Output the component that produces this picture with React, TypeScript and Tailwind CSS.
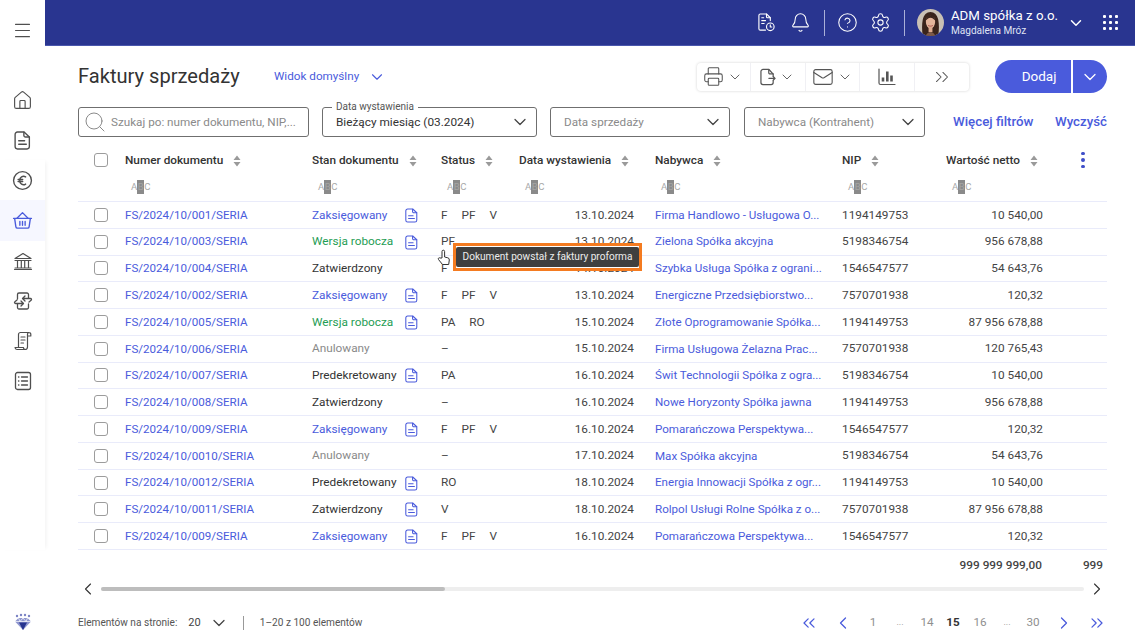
import { ChevronDown, ChevronLeft, ChevronRight, ChevronsLeft, ChevronsRight, Search, Bell, CircleHelp, Settings, Menu, House, Printer, Mail } from 'lucide-react';

const BLUE = 'text-[#4a5bdc]';

type Row = {
  id: string;
  state: string;
  tone: 'blue' | 'green' | 'dark' | 'gray';
  doc: boolean;
  tags: string[];
  date: string;
  buyer: string;
  nip: string;
  net: string;
};

const rows: Row[] = [
  { id: 'FS/2024/10/001/SERIA', state: 'Zaksięgowany', tone: 'blue', doc: true, tags: ['F', 'PF', 'V'], date: '13.10.2024', buyer: 'Firma Handlowo - Usługowa O...', nip: '1194149753', net: '10 540,00' },
  { id: 'FS/2024/10/003/SERIA', state: 'Wersja robocza', tone: 'green', doc: true, tags: ['PF'], date: '13.10.2024', buyer: 'Zielona Spółka akcyjna', nip: '5198346754', net: '956 678,88' },
  { id: 'FS/2024/10/004/SERIA', state: 'Zatwierdzony', tone: 'dark', doc: false, tags: ['F'], date: '14.10.2024', buyer: 'Szybka Usługa Spółka z ograni...', nip: '1546547577', net: '54 643,76' },
  { id: 'FS/2024/10/002/SERIA', state: 'Zaksięgowany', tone: 'blue', doc: true, tags: ['F', 'PF', 'V'], date: '13.10.2024', buyer: 'Energiczne Przedsiębiorstwo...', nip: '7570701938', net: '120,32' },
  { id: 'FS/2024/10/005/SERIA', state: 'Wersja robocza', tone: 'green', doc: true, tags: ['PA', 'RO'], date: '15.10.2024', buyer: 'Złote Oprogramowanie Spółka...', nip: '1194149753', net: '87 956 678,88' },
  { id: 'FS/2024/10/006/SERIA', state: 'Anulowany', tone: 'gray', doc: false, tags: ['–'], date: '15.10.2024', buyer: 'Firma Usługowa Żelazna Prac...', nip: '7570701938', net: '120 765,43' },
  { id: 'FS/2024/10/007/SERIA', state: 'Predekretowany', tone: 'dark', doc: true, tags: ['PA'], date: '16.10.2024', buyer: 'Świt Technologii Spółka z ogra...', nip: '5198346754', net: '10 540,00' },
  { id: 'FS/2024/10/008/SERIA', state: 'Zatwierdzony', tone: 'dark', doc: false, tags: ['–'], date: '16.10.2024', buyer: 'Nowe Horyzonty Spółka jawna', nip: '1194149753', net: '956 678,88' },
  { id: 'FS/2024/10/009/SERIA', state: 'Zaksięgowany', tone: 'blue', doc: true, tags: ['F', 'PF', 'V'], date: '16.10.2024', buyer: 'Pomarańczowa Perspektywa...', nip: '1546547577', net: '120,32' },
  { id: 'FS/2024/10/0010/SERIA', state: 'Anulowany', tone: 'gray', doc: false, tags: ['–'], date: '17.10.2024', buyer: 'Max Spółka akcyjna', nip: '5198346754', net: '54 643,76' },
  { id: 'FS/2024/10/0012/SERIA', state: 'Predekretowany', tone: 'dark', doc: true, tags: ['RO'], date: '18.10.2024', buyer: 'Energia Innowacji Spółka z ogr...', nip: '1194149753', net: '10 540,00' },
  { id: 'FS/2024/10/0011/SERIA', state: 'Zatwierdzony', tone: 'dark', doc: true, tags: ['V'], date: '18.10.2024', buyer: 'Rolpol Usługi Rolne Spółka z o...', nip: '7570701938', net: '87 956 678,88' },
  { id: 'FS/2024/10/009/SERIA', state: 'Zaksięgowany', tone: 'blue', doc: true, tags: ['F', 'PF', 'V'], date: '16.10.2024', buyer: 'Pomarańczowa Perspektywa...', nip: '1546547577', net: '120,32' },
];

const toneClass = {
  blue: 'text-[#4a5bdc]',
  green: 'text-[#1f9d55]',
  dark: 'text-[#333333]',
  gray: 'text-[#8a8a8a]',
};

function DocIcon({ className }: { className?: string }) {
  return (
    <svg viewBox="0 0 16 18" fill="none" stroke="currentColor" strokeWidth="1.3" strokeLinecap="round" strokeLinejoin="round" className={className}>
      <path d="M3.2 1h6.3l5 4.6v9.2a2.2 2.2 0 0 1-2.2 2.2H3.2A2.2 2.2 0 0 1 1 14.800V3.200A2.200 2.200 0 0 1 3.200 1Z" />
      <path d="M9.300 1.200v3a1.500 1.500 0 0 0 1.500 1.500h3.600" />
      <path d="M4.400 9.200h5.600M4.400 12.600h7.200" />
    </svg>
  );
}

function DocSendIcon() {
  return (
    <svg viewBox="0 0 17 18" fill="none" stroke="currentColor" strokeWidth="1.300" strokeLinecap="round" strokeLinejoin="round" className="w-[16px] h-[18px]">
      <path d="M14 8V6L9.500 1H3.200A2.200 2.200 0 0 0 1 3.200v11.600A2.200 2.200 0 0 0 3.200 17h8.600a2.200 2.200 0 0 0 2.200-2.200V13" />
      <path d="M9.300 1.200v3.300a1.200 1.200 0 0 0 1.200 1.200H14M9.500 10.500H16M14 8.500l2 2-2 2" />
    </svg>
  );
}

function ChartBarsIcon() {
  return (
    <svg viewBox="0 0 18 18" className="w-[18px] h-[18px]" fill="none" stroke="currentColor" strokeLinecap="round">
      <path d="M1 1v14a1.500 1.500 0 0 0 1.500 1.500H17" strokeWidth="1.200" />
      <path d="M5 9.500v4M9.300 3.500v10M13.500 7.500v6" strokeWidth="2.600" strokeLinecap="butt" />
    </svg>
  );
}

function DocClockIcon() {
  return (
    <svg viewBox="0 0 20 20" fill="none" stroke="currentColor" strokeWidth="1.2" strokeLinecap="round" strokeLinejoin="round" className="w-[19px] h-[19px] text-white">
      <path d="M9 18H3.500A1.500 1.500 0 0 1 2 16.500v-14A1.500 1.500 0 0 1 3.500 1H10l4 4v3" />
      <path d="M10 1.200V4a1 1 0 0 0 1 1h3M5 8h4M5 11h2.500M5 5h2" />
      <circle cx="14" cy="14.500" r="4" />
      <path d="M14 12.500v2.200h1.600" />
    </svg>
  );
}

function EuroCircleIcon() {
  return (
    <svg viewBox="0 0 20 20" fill="none" stroke="currentColor" strokeWidth="1.300" strokeLinecap="round" className="w-[21px] h-[21px]">
      <circle cx="10" cy="10" r="8.500" />
      <path d="M13 6.600a3.600 3.600 0 0 0-5.600 3.400 3.600 3.600 0 0 0 5.600 3.400M5.800 9h4.400M5.800 11h4.400" />
    </svg>
  );
}

function BasketIcon() {
  return (
    <svg viewBox="0 0 20 20" fill="none" stroke="currentColor" strokeWidth="1.300" strokeLinecap="round" strokeLinejoin="round" className="w-[21px] h-[21px]">
      <path d="M1.500 8h17M2.500 8l1.200 8a1.500 1.500 0 0 0 1.500 1.300h9.600a1.500 1.500 0 0 0 1.500-1.300l1.200-8" />
      <path d="M4.500 8 10 2.500 15.500 8M7.500 11v3.500M10 11v3.500M12.500 11v3.500" />
    </svg>
  );
}

function BankIcon() {
  return (
    <svg viewBox="0 0 20 20" fill="none" stroke="currentColor" strokeWidth="1.200" strokeLinecap="round" strokeLinejoin="round" className="w-[20px] h-[20px]">
      <path d="M2 7.500 10 2.500l8 5H2ZM2 9.500h16M4.500 9.500v7M8.300 9.500v7M11.700 9.500v7M15.500 9.500v7M2 17h16M1.500 18.500h17" />
    </svg>
  );
}

function ExchangeIcon() {
  return (
    <svg viewBox="0 0 20 20" fill="none" stroke="currentColor" strokeWidth="1.300" strokeLinecap="round" strokeLinejoin="round" className="w-[20px] h-[20px]">
      <path d="M4.500 8V3.500A1.500 1.500 0 0 1 6 2h8a1.500 1.500 0 0 1 1.500 1.500V7M15.500 13v3.500A1.500 1.500 0 0 1 14 18H6a1.500 1.500 0 0 1-1.500-1.500V13" />
      <path d="M10 7.500h7.500a1 1 0 0 1 .6 1.800L16 11M12 5l-2.500 2.500L12 10M10 12.500H2.500a1 1 0 0 1-.6-1.800L4 9M8 10l2.500 2.500L8 15" />
    </svg>
  );
}

function ScrollIcon() {
  return (
    <svg viewBox="0 0 20 20" fill="none" stroke="currentColor" strokeWidth="1.200" strokeLinecap="round" strokeLinejoin="round" className="w-[20px] h-[20px]">
      <path d="M5.500 16.500V3.500A2 2 0 0 1 7.500 1.500H16a1.800 1.800 0 0 1 1.800 1.800V5h-3.300M16 1.500a1.600 1.600 0 0 0-1.500 1.800V16a2.500 2.500 0 0 1-2.500 2.500H4a2.200 2.200 0 0 1-2-2h8.500a1.800 1.800 0 0 0 2 2" />
      <path d="M8 6h4M8 9h4M8 12h2.500" />
    </svg>
  );
}

function ListIcon() {
  return (
    <svg viewBox="0 0 20 20" fill="none" stroke="currentColor" strokeWidth="1.300" strokeLinecap="round" className="w-[20px] h-[20px]">
      <rect x="2.500" y="1.500" width="15" height="17" rx="2" />
      <path d="M8.500 6h6M8.500 10h6M8.500 14h6M5.500 6h.4M5.500 10h.4M5.500 14h.4" />
    </svg>
  );
}

function Logo() {
  return (
    <svg viewBox="0 0 20 20" className="w-[20px] h-[20px]">
      <path d="M2 9.500 5.500 6h9L18 9.500 10 18Z" fill="#8e96cf" />
      <path d="M6 10.500h8L10 18Z" fill="#27348f" />
      <path d="M2 9.500h16M5.500 6 7 9.500 10 6l3 3.500L14.500 6" stroke="#ffffff" strokeWidth="0.700" fill="none" />
      <circle cx="4" cy="4" r="1.200" fill="#7b84c4" />
      <circle cx="8" cy="3" r="1.200" fill="#7b84c4" />
      <circle cx="12" cy="3" r="1.200" fill="#7b84c4" />
      <circle cx="16" cy="4" r="1.200" fill="#7b84c4" />
    </svg>
  );
}

function Avatar() {
  return (
    <svg viewBox="0 0 28 28" className="w-[27px] h-[27px] rounded-full">
      <rect width="28" height="28" fill="#c9c0b4" />
      <path d="M6 28c-1-6-1-12 0-17 1-5 4-8 8-8s7 3 8 8c1 5 1 11 0 17Z" fill="#3a241b" />
      <path d="M9 28c1-3 3-4 5-4s4 1 5 4Z" fill="#7d5a4a" />
      <ellipse cx="14" cy="13.500" rx="4.800" ry="6.500" fill="#e3b59b" />
      <rect x="12" y="18" width="4" height="6" fill="#dcab90" />
      <path d="M9 12c1-4 3-5.500 5-5.500s4 1.500 5 5.500c-2-2-3-3-5-3s-3 1-5 3Z" fill="#3a241b" />
      <path d="M11.500 17c1.500 1 3.500 1 5 0" stroke="#a8524c" strokeWidth="0.900" fill="none" />
    </svg>
  );
}

function SortIcon() {
  return (
    <svg viewBox="0 0 8 12" className="w-[8px] h-[12px] shrink-0 text-[#9a9a9a]" fill="currentColor">
      <path d="M4 0.500 7.500 5H0.500ZM4 11.500 0.500 7h7Z" />
    </svg>
  );
}

function Abc() {
  return (
    <span className="inline-flex items-center h-[14px] text-[9.500px] leading-none text-[#a8a8a8]">
      A<span className="flex items-center h-[14px] px-[0.500px] bg-[#8a8a8a] text-[#a5a5a5]">B</span>C
    </span>
  );
}

function Checkbox() {
  return <span className="block w-[14px] h-[14px] rounded-[3px] border border-[#9c9c9c] bg-white" />;
}

function HeaderCell({ label }: { label: string }) {
  return (
    <div className="flex items-center gap-[10px] pt-px">
      <span className="font-medium text-[#333333] whitespace-nowrap">{label}</span>
      <SortIcon />
    </div>
  );
}

function FilterSelect({ label, className }: { label: string; className: string }) {
  return (
    <div className={`flex items-center justify-between h-[30px] pl-[13px] pr-[6px] rounded-[3px] border border-[#6f6f6f] text-[11.700px] text-[#8a8a8a] ${className}`}>
      <span className="pt-px">{label}</span>
      <ChevronDown className="w-[20px] h-[20px] text-[#444444]" strokeWidth={1.500} />
    </div>
  );
}

function ToolCell({ children, caret = true, last = false }: { children: React.ReactNode; caret?: boolean; last?: boolean }) {
  return (
    <div className={`flex items-center justify-center gap-[3px] w-[54.500px] h-full text-[#555555] ${last ? '' : 'border-r border-[#f0f0f4]'}`}>
      {children}
      {caret && <ChevronDown className="w-[16px] h-[16px] text-[#666666]" strokeWidth={1.500} />}
    </div>
  );
}

const tableCols = 'grid grid-cols-[47px_187px_129px_78px_136px_187px_104px_97px_1fr] items-center';

export default function App() {
  return (
    <div className="relative flex w-[1135px] h-[638px] overflow-hidden bg-white text-[#333333] font-['Roboto',sans-serif]">
      {/* Sidebar */}
      <aside className="flex flex-col w-[45px] shrink-0 h-full text-[#4f4f4f]">
        <div className="flex items-center justify-center h-[46px] pt-[14px]">
          <Menu className="w-[21px] h-[21px]" strokeWidth={1.200} />
        </div>
        <div className="flex flex-col pt-[34px] h-[114px]">
          <div className="flex items-center justify-center h-[40px]"><House className="w-[21px] h-[21px]" strokeWidth={1.300} /></div>
          <div className="flex items-center justify-center h-[40px]"><DocIcon className="w-[17px] h-[19px]" /></div>
        </div>
        <nav className="flex flex-col h-[390px] shadow-[3px_0_4px_-2px_rgba(0,0,0,0.06)]">
          <div className="flex items-center justify-center h-[40px]"><EuroCircleIcon /></div>
          <div className={`flex items-center justify-center h-[41px] bg-[#f6f7ff] ${BLUE}`}><BasketIcon /></div>
          <div className="flex items-center justify-center h-[40px]"><BankIcon /></div>
          <div className="flex items-center justify-center h-[40px]"><ExchangeIcon /></div>
          <div className="flex items-center justify-center h-[40px]"><ScrollIcon /></div>
          <div className="flex items-center justify-center h-[40px]"><ListIcon /></div>
        </nav>
        <div className="flex items-center justify-center mt-[62px]"><Logo /></div>
      </aside>

      <div className="flex flex-col flex-1 min-w-0">
        {/* Header */}
        <header className="flex items-center justify-end h-[46px] shrink-0 pr-[17px] bg-[#293590] border-b border-[#4a57ad] text-white">
          <DocClockIcon />
          <Bell className="w-[21px] h-[21px] ml-[14px]" strokeWidth={1.200} />
          <span className="w-px h-[26px] ml-[13px] bg-[#aab0d8]" />
          <CircleHelp className="w-[21px] h-[21px] ml-[12px]" strokeWidth={1.200} />
          <Settings className="w-[21px] h-[21px] ml-[12px]" strokeWidth={1.200} />
          <span className="w-px h-[26px] ml-[13px] bg-[#aab0d8]" />
          <div className="ml-[12px]"><Avatar /></div>
          <div className="flex flex-col ml-[7px] w-[116px]">
            <span className="text-[13.300px] leading-[17px] whitespace-nowrap">ADM spółka z o.o.</span>
            <span className="text-[10.100px] leading-[14px] whitespace-nowrap text-[#dfe2f3]">Magdalena Mróz</span>
          </div>
          <ChevronDown className="w-[18px] h-[18px]" strokeWidth={2} />
          <div className="grid grid-cols-3 gap-[2.300px] ml-[18px]">
            {Array.from({ length: 9 }).map((_, i) => (
              <span key={i} className="w-[3.500px] h-[3.500px] rounded-[1px] bg-white" />
            ))}
          </div>
        </header>

        <main className="flex flex-col flex-1 min-h-0 pl-[33px] pr-[28px]">
          {/* Title row */}
          <div className="flex items-center h-[33px] mt-[14px]">
            <h1 className="w-[196px] text-[20.100px] leading-none text-[#333333]">Faktury sprzedaży</h1>
            <span className={`text-[11.700px] ${BLUE}`}>Widok domyślny</span>
            <ChevronDown className={`w-[18px] h-[18px] ml-[9px] ${BLUE}`} strokeWidth={1.500} />
            <div className="flex items-center h-[28px] ml-auto rounded-[4px] bg-white shadow-[0_0_3px_rgba(0,0,0,0.18)]">
              <ToolCell><Printer className="w-[21px] h-[21px]" strokeWidth={1.200} /></ToolCell>
              <ToolCell><DocSendIcon /></ToolCell>
              <ToolCell><Mail className="w-[22px] h-[22px]" strokeWidth={1.200} /></ToolCell>
              <ToolCell caret={false}><ChartBarsIcon /></ToolCell>
              <ToolCell caret={false} last><ChevronsRight className="w-[22px] h-[22px]" strokeWidth={1.100} /></ToolCell>
            </div>
            <div className="flex h-[33px] ml-[26px] text-white">
              <span className="flex items-center justify-center w-[76px] pl-[12px] rounded-l-full bg-[#4a5bdc] text-[13.500px]">Dodaj</span>
              <span className="flex items-center justify-center w-[34px] ml-[2px] rounded-r-full bg-[#4a5bdc]">
                <ChevronDown className="w-[20px] h-[20px]" strokeWidth={1.500} />
              </span>
            </div>
          </div>

          {/* Filters */}
          <div className="flex items-center h-[30px] mt-[14px]">
            <div className="flex items-center w-[231px] h-full pl-[4px] rounded-[3px] border border-[#6f6f6f] text-[11.700px] text-[#8a8a8a]">
              <Search className="w-[24px] h-[24px] mr-[4px] text-[#8a8a8a]" strokeWidth={1} />
              <span className="pt-px whitespace-nowrap">Szukaj po: numer dokumentu, NIP,...</span>
            </div>
            <div className="relative flex items-center justify-between w-[215px] h-full ml-[13px] pl-[13px] pr-[6px] rounded-[3px] border border-[#6f6f6f] text-[11.800px] text-[#333333]">
              <span className="absolute -top-[7px] left-[9px] px-[4px] bg-white text-[10px] leading-[12px] text-[#555555]">Data wystawienia</span>
              <span className="pt-px">Bieżący miesiąc (03.2024)</span>
              <ChevronDown className="w-[20px] h-[20px] text-[#444444]" strokeWidth={1.500} />
            </div>
            <FilterSelect label="Data sprzedaży" className="w-[180px] ml-[13px]" />
            <FilterSelect label="Nabywca (Kontrahent)" className="w-[181px] ml-[14px]" />
            <span className={`ml-[28px] text-[13.300px] font-medium whitespace-nowrap ${BLUE}`}>Więcej filtrów</span>
            <span className={`ml-auto text-[13.300px] font-medium ${BLUE}`}>Wyczyść</span>
          </div>

          {/* Table */}
          <div className="mt-[10px] text-[11.800px]">
            <div className={`${tableCols} h-[26px]`}>
              <div className="pl-[16px]"><Checkbox /></div>
              <HeaderCell label="Numer dokumentu" />
              <HeaderCell label="Stan dokumentu" />
              <HeaderCell label="Status" />
              <HeaderCell label="Data wystawienia" />
              <HeaderCell label="Nabywca" />
              <HeaderCell label="NIP" />
              <div className="whitespace-nowrap"><HeaderCell label="Wartość netto" /></div>
              <div className="flex flex-col items-center gap-[3px] pl-[16px]">
                <span className="w-[3.500px] h-[3.500px] rounded-full bg-[#3f4fc9]" />
                <span className="w-[3.500px] h-[3.500px] rounded-full bg-[#3f4fc9]" />
                <span className="w-[3.500px] h-[3.500px] rounded-full bg-[#3f4fc9]" />
              </div>
            </div>
            <div className={`${tableCols} h-[28px]`}>
              <div />
              <div className="pl-[6px]"><Abc /></div>
              <div className="pl-[6px]"><Abc /></div>
              <div className="pl-[6px]"><Abc /></div>
              <div className="pl-[6px]"><Abc /></div>
              <div className="pl-[6px]"><Abc /></div>
              <div className="pl-[6px]"><Abc /></div>
              <div className="pl-[6px]"><Abc /></div>
              <div />
            </div>
            <div className="border-t border-[#e9ebfa]">
              {rows.map((r, i) => (
                <div key={i} className={`${tableCols} h-[26.770px] pt-px border-b border-[#e9ebfa]`}>
                  <div className="pl-[16px] -mt-px"><Checkbox /></div>
                  <span className={`text-[11.600px] ${BLUE}`}>{r.id}</span>
                  <div className="flex items-center">
                    <span className={`w-[93px] whitespace-nowrap ${toneClass[r.tone]}`}>{r.state}</span>
                    {r.doc && <DocIcon className={`w-[13px] h-[15px] ${BLUE}`} />}
                  </div>
                  <div className="flex gap-[14px] text-[#444444]">
                    {r.tags.map((t) => <span key={t}>{t}</span>)}
                  </div>
                  <span className="pr-[21px] text-right text-[#444444]">{r.date}</span>
                  <span className={`text-[11.600px] whitespace-nowrap ${BLUE}`}>{r.buyer}</span>
                  <span className="text-[#444444]">{r.nip}</span>
                  <span className="text-right whitespace-nowrap text-[#444444]">{r.net}</span>
                  <div />
                </div>
              ))}
            </div>
            {/* Totals */}
            <div className="flex items-center justify-end h-[32px] pr-[4px] font-medium text-[#444444]">
              <span>999 999 999,00</span>
              <span className="ml-[41px]">999</span>
            </div>
          </div>

          {/* Horizontal scroll */}
          <div className="flex items-center h-[14px] text-[#333333]">
            <ChevronLeft className="w-[20px] h-[20px]" strokeWidth={1.300} />
            <div className="flex-1 h-[4px] mx-[3px] rounded-full bg-[#eeeeee]">
              <div className="w-[344px] h-full rounded-full bg-[#bdbdbd]" />
            </div>
            <ChevronRight className="w-[20px] h-[20px]" strokeWidth={1.300} />
          </div>

          {/* Footer */}
          <div className="flex items-center h-[26px] mt-[14px] text-[10.100px] text-[#555555]">
            <span>Elementów na stronie:</span>
            <span className="ml-[11px] text-[11px] text-[#444444]">20</span>
            <ChevronDown className="w-[20px] h-[20px] ml-[8px] text-[#444444]" strokeWidth={1.500} />
            <span className="w-px h-[14px] ml-[14px] bg-[#999999]" />
            <span className="ml-[16px]">1–20 z 100 elementów</span>
            <div className="flex items-center ml-auto text-[11.700px] text-[#8f8f8f]">
              <ChevronsLeft className={`w-[20px] h-[20px] ${BLUE}`} strokeWidth={1.500} />
              <ChevronLeft className={`w-[20px] h-[20px] ml-[14px] ${BLUE}`} strokeWidth={1.500} />
              <span className="w-[20px] ml-[10px] text-center">1</span>
              <span className="w-[20px] ml-[7px] text-center text-[9px]">...</span>
              <span className="w-[20px] ml-[7px] text-center">14</span>
              <span className="w-[20px] ml-[6px] text-center font-bold text-[#333333]">15</span>
              <span className="w-[20px] ml-[7px] text-center">16</span>
              <span className="w-[20px] ml-[7px] text-center text-[9px]">...</span>
              <span className="w-[20px] ml-[6px] text-center">30</span>
              <ChevronRight className={`w-[20px] h-[20px] ml-[11px] ${BLUE}`} strokeWidth={1.500} />
              <ChevronsRight className={`w-[20px] h-[20px] ml-[13px] ${BLUE}`} strokeWidth={1.500} />
            </div>
          </div>
        </main>
      </div>

      {/* Tooltip with highlight, and the pointer */}
      <div className="absolute left-[453px] top-[243px] w-[189px] h-[28px] py-px border-[3px] border-[#f47b20] bg-white">
        <div className="flex items-center justify-center h-full rounded-[2px] bg-[#3f3f3f] text-[10.100px] text-[#ececec] whitespace-nowrap">
          Dokument powstał z faktury proforma
        </div>
      </div>
      <svg viewBox="0 0 14 20" className="absolute left-[437px] top-[249px] w-[14px] h-[20px]" fill="#ffffff" stroke="#333333" strokeWidth="1" strokeLinejoin="round">
        <path d="M5 9V2.500a1.300 1.300 0 0 1 2.600 0V8l3.200.8a2 2 0 0 1 1.500 2.200l-.6 4.500H5.500L1.500 10.500c-.8-1 .5-2.300 1.500-1.500Z" />
      </svg>
    </div>
  );
}
